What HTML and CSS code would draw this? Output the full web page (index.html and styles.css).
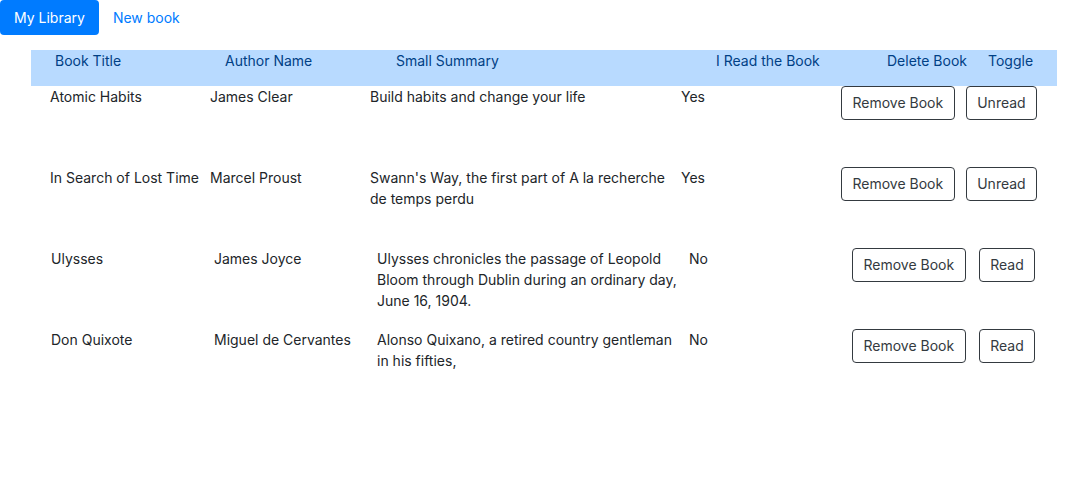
FILE: index.html
```html
<!DOCTYPE html>
<html lang="en">
<head>
<meta charset="utf-8">
<title>My Library</title>
<link rel="stylesheet" href="styles.css">
</head>
<body>
<nav class="nav">
  <a class="nav-link active" href="#">My Library</a>
  <a class="nav-link" href="#">New book</a>
</nav>
<section class="library">
  <div class="head">
    <div>Book Title</div>
    <div>Author Name</div>
    <div>Small Summary</div>
    <div>I Read the Book</div>
    <div>Delete Book</div>
    <div>Toggle</div>
  </div>
  <div class="book book-a">
    <div>Atomic Habits</div>
    <div>James Clear</div>
    <div class="summary">Build habits and change your life</div>
    <div>Yes</div>
    <div class="actions"><button class="btn">Remove Book</button><button class="btn">Unread</button></div>
  </div>
  <div class="book book-a">
    <div>In Search of Lost Time</div>
    <div>Marcel Proust</div>
    <div class="summary">Swann's Way, the first part of A la recherche de temps perdu</div>
    <div>Yes</div>
    <div class="actions"><button class="btn">Remove Book</button><button class="btn">Unread</button></div>
  </div>
  <div class="book book-b">
    <div>Ulysses</div>
    <div>James Joyce</div>
    <div class="summary">Ulysses chronicles the passage of Leopold Bloom through Dublin during an ordinary day, June 16, 1904.</div>
    <div>No</div>
    <div class="actions"><button class="btn">Remove Book</button><button class="btn">Read</button></div>
  </div>
  <div class="book book-b">
    <div>Don Quixote</div>
    <div>Miguel de Cervantes</div>
    <div class="summary">Alonso Quixano, a retired country gentleman in his fifties,</div>
    <div>No</div>
    <div class="actions"><button class="btn">Remove Book</button><button class="btn">Read</button></div>
  </div>
</section>
</body>
</html>
```

FILE: styles.css
```css
* { box-sizing: border-box; }
body {
  margin: 0;
  font-family: Inter, "Noto Sans", "Liberation Sans", sans-serif;
  font-size: 14px;
  line-height: 21px;
  color: #212529;
  background: #fff;
}
.nav {
  display: flex;
}
.nav-link {
  display: block;
  padding: 7px 14px;
  color: #007bff;
  text-decoration: none;
  border-radius: 4px;
}
.nav-link.active {
  color: #fff;
  background: #007bff;
}
.library {
  margin: 15px 30px 0 31px;
  width: 1026px;
}
.head {
  display: grid;
  grid-template-columns: 170px 171px 320px 171px 101px 1fr;
  height: 36px;
  padding: 0 0 0 24px;
  background: #b8daff;
  color: #004085;
}
.book {
  display: grid;
  height: 81px;
  align-items: start;
}
.book-a {
  grid-template-columns: 160px 160px 311px 160px 1fr;
  padding-left: 19px;
}
.book-b {
  grid-template-columns: 163px 163px 312px 163px 1fr;
  padding-left: 20px;
}
.summary {
  padding-right: 8px;
}
.actions {
  display: flex;
  gap: 11px;
}
.book-b .actions {
  gap: 13px;
}
.btn {
  font: inherit;
  line-height: 21px;
  color: #343a40;
  background: transparent;
  border: 1px solid #343a40;
  border-radius: 4px;
  padding: 5px 10.5px 6px;
}
```
